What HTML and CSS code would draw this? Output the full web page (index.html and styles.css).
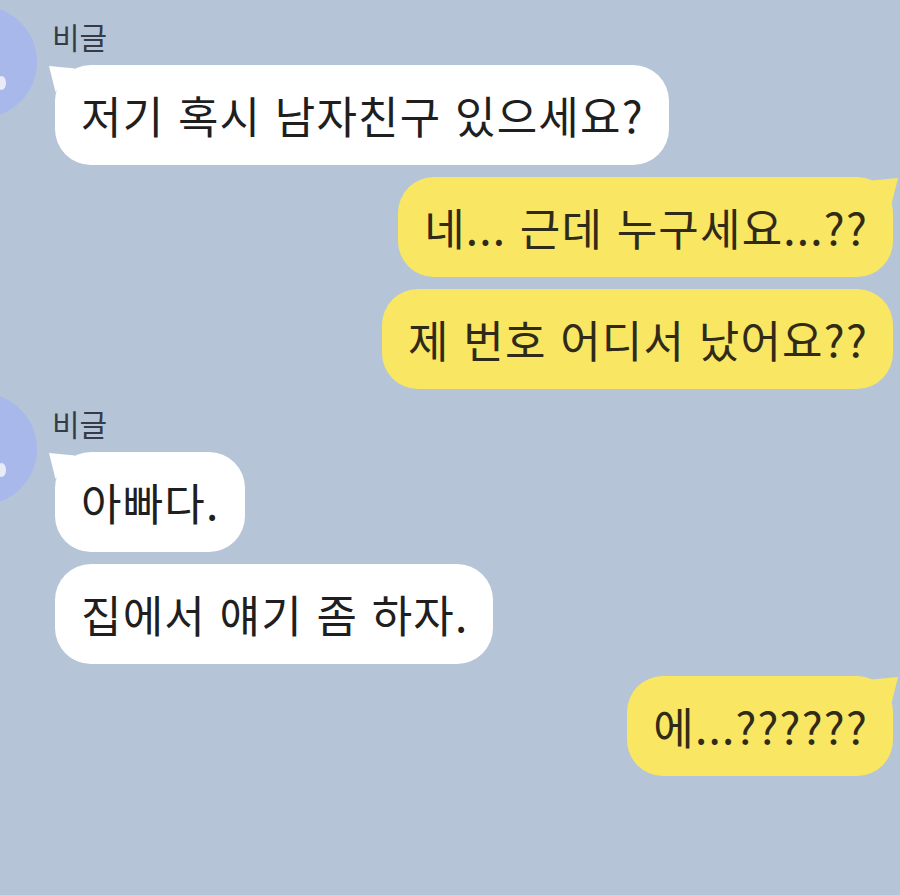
FILE: index.html
```html
<!DOCTYPE html>
<html lang="ko">
<head>
    <meta charset="UTF-8">
    <meta name="viewport" content="width=device-width, initial-scale=1.0">
    <title>비글 - 채팅</title>
    <link rel="stylesheet" href="styles.css">
</head>
<body>
    <div class="chat">
        <div class="group them">
            <div class="avatar"><span class="avatar-spot"></span></div>
            <div class="messages">
                <div class="name">비글</div>
                <div class="bubble tail">저기 혹시 남자친구 있으세요?</div>
            </div>
        </div>

        <div class="group me">
            <div class="bubble tail">네... 근데 누구세요...??</div>
            <div class="bubble">제 번호 어디서 났어요??</div>
        </div>

        <div class="group them">
            <div class="avatar"><span class="avatar-spot"></span></div>
            <div class="messages">
                <div class="name">비글</div>
                <div class="bubble tail">아빠다.</div>
                <div class="bubble">집에서 얘기 좀 하자.</div>
            </div>
        </div>

        <div class="group me">
            <div class="bubble tail">에...??????</div>
        </div>
    </div>
</body>
</html>
```

FILE: styles.css
```css
:root {
    --background: #b5c5d7;
    --bubble-them: #ffffff;
    --bubble-me: #f9e662;
    --avatar: #a9b8ea;
    --text: #1f1f1f;
    --text-me: #302b18;
    --name: #353c48;
}

* {
    margin: 0;
    padding: 0;
    box-sizing: border-box;
}

body {
    font-family: 'Noto Sans CJK KR', 'Noto Sans', sans-serif;
    background-color: var(--background);
    color: var(--text);
    min-height: 100vh;
    overflow: hidden;
}

.chat {
    display: flex;
    flex-direction: column;
    padding: 6px 7px 0 0;
}

.group {
    display: flex;
    gap: 12px;
}

.group + .group {
    margin-top: 12px;
}

.me + .them {
    margin-top: 4px;
}

.them {
    align-items: flex-start;
}

.me {
    flex-direction: column;
    align-items: flex-end;
}

.avatar {
    position: relative;
    flex: none;
    width: 112px;
    height: 112px;
    margin-left: -75px;
    border-radius: 50%;
    background-color: var(--avatar);
    overflow: hidden;
}

.avatar-spot {
    position: absolute;
    left: 72px;
    top: 70px;
    width: 9px;
    height: 14px;
    border-radius: 50%;
    background-color: #e8ecf6;
}

.messages {
    display: flex;
    flex-direction: column;
    align-items: flex-start;
    gap: 12px;
    margin-left: 6px;
}

.name {
    height: 48px;
    padding-top: 12px;
    margin: 0 0 -1px -3px;
    font-size: 30px;
    line-height: 36px;
    color: var(--name);
}

.bubble {
    position: relative;
    display: flex;
    align-items: center;
    height: 100px;
    padding: 0 25px 0 26px;
    border-radius: 36px;
    font-size: 44px;
    line-height: 1;
    letter-spacing: 1.2px;
    white-space: nowrap;
}

.them .bubble {
    background-color: var(--bubble-them);
}

.me .bubble {
    background-color: var(--bubble-me);
    color: var(--text-me);
}

.bubble.tail::before {
    content: "";
    position: absolute;
    top: 1px;
    width: 26px;
    height: 26px;
}

.them .bubble.tail::before {
    left: -6px;
    background-color: var(--bubble-them);
    clip-path: polygon(0 0, 100% 10%, 25% 100%);
}

.me .bubble.tail::before {
    right: -5px;
    background-color: var(--bubble-me);
    clip-path: polygon(100% 0, 0 10%, 75% 100%);
}
```
